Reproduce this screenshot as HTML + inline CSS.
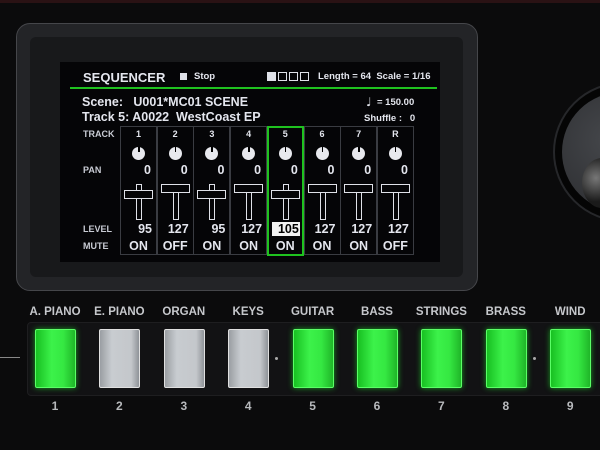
<!DOCTYPE html>
<html><head><style>
*{margin:0;padding:0;box-sizing:border-box}
body{width:600px;height:450px;background:#0b0b0c;position:relative;overflow:hidden;font-family:"Liberation Sans",sans-serif;font-weight:bold}
.a{position:absolute}
.t{position:absolute;color:#e4e6ee;white-space:nowrap}
.g{color:#c9ccd4}
.btn{position:absolute;top:329px;width:41px;height:59px;border-radius:2px}
.on{background:linear-gradient(90deg,#18c022,#3cf24a 40%,#35e842 70%,#1fb628);box-shadow:0 0 6px #1a9a22;border:1px solid #5aff66}
.off{background:linear-gradient(90deg,#9a9ea3,#c8ccd0 30%,#c4c7cb 80%,#8f9398);border:1px solid #e0e0e0}
.lab{position:absolute;top:306px;font-size:11.5px;color:#c6c8cc;width:80px;text-align:center}
.num{position:absolute;top:399px;font-size:12px;color:#b8babd;width:20px;text-align:center}
</style></head><body>
<div class="a" style="left:0;top:0;width:600px;height:3px;background:#2a1214"></div>
<!-- bezel -->
<div class="a" style="left:16px;top:23px;width:462px;height:268px;border-radius:14px;background:#232427;border:1px solid #45464a"></div>
<div class="a" style="left:30px;top:37px;width:433px;height:240px;border-radius:6px;background:#18191b"></div>
<div class="a" style="left:60px;top:62px;width:380px;height:200px;background:#050507"></div>
<!-- knob -->
<div class="a" style="left:553px;top:82px;width:140px;height:140px;border-radius:50%;background:#050505;border:2px solid #26272a"></div>
<div class="a" style="left:562px;top:92px;width:120px;height:120px;border-radius:50%;background:radial-gradient(circle at 40% 40%,#45474b,#27282b)"></div>
<div class="a" style="left:582px;top:158px;width:40px;height:50px;border-radius:50%;background:radial-gradient(circle at 35% 40%,#777,#1a1a1a 60%)"></div>
<!-- header -->
<div class="t" style="left:83px;top:70px;font-size:13px">SEQUENCER</div>
<div class="a" style="left:180px;top:73px;width:7px;height:7px;background:#dfe1e8"></div>
<div class="t" style="left:194px;top:71px;font-size:9.5px">Stop</div>
<div class="a" style="left:267px;top:72px;width:9px;height:9px;background:#dfe1e8"></div>
<div class="a" style="left:278px;top:72px;width:9px;height:9px;border:1px solid #dfe1e8"></div>
<div class="a" style="left:289px;top:72px;width:9px;height:9px;border:1px solid #dfe1e8"></div>
<div class="a" style="left:300px;top:72px;width:9px;height:9px;border:1px solid #dfe1e8"></div>
<div class="t" style="left:318px;top:71px;font-size:9.5px">Length = 64&nbsp; Scale = 1/16</div>
<div class="a" style="left:70px;top:87px;width:367px;height:2px;background:#1fc21f"></div>
<div class="t" style="left:82px;top:95px;font-size:12.5px">Scene:&nbsp;&nbsp; U001*MC01 SCENE</div>
<div class="t" style="left:82px;top:110px;font-size:12.5px">Track 5: A0022&nbsp; WestCoast EP</div>
<div class="t" style="left:366px;top:95px;font-size:12px;font-family:'DejaVu Sans',sans-serif;font-weight:normal">♩</div>
<div class="t" style="left:377px;top:97px;font-size:9.5px">= 150.00</div>
<div class="t" style="left:364px;top:113px;font-size:9.5px">Shuffle :&nbsp;&nbsp; 0</div>
<div class="t g" style="left:83px;top:129px;font-size:9px">TRACK</div>
<div class="t g" style="left:83px;top:165px;font-size:9px">PAN</div>
<div class="t g" style="left:83px;top:224px;font-size:9px">LEVEL</div>
<div class="t g" style="left:83px;top:241px;font-size:9px">MUTE</div>
<div id="grid"></div>
<!-- buttons -->
<div class="a" style="left:27px;top:322px;width:580px;height:74px;border-radius:4px;background:#121214;border:1px solid #1e1e20"></div>
<div class="a" style="left:0;top:357px;width:20px;height:1px;background:#888"></div>
<div class="a" style="left:275px;top:357px;width:3px;height:3px;border-radius:50%;background:#aaa"></div>
<div class="a" style="left:533px;top:357px;width:3px;height:3px;border-radius:50%;background:#aaa"></div>
<div id="btns"></div>
<script>
var lv=[95,127,95,127,105,127,127,127],mu=["ON","OFF","ON","ON","ON","ON","ON","OFF"],tr=["1","2","3","4","5","6","7","R"];
var h="";
for(var i=0;i<8;i++){var x=120+i*36.7;
h+='<div class="a" style="left:'+x+'px;top:126px;width:37px;height:129px;border:1px solid #3a3c42"></div>';
h+='<div class="t" style="left:'+x+'px;top:129px;width:37px;text-align:center;font-size:9px">'+tr[i]+'</div>';
h+='<div class="a" style="left:'+(x+12)+'px;top:147px;width:13px;height:13px;border-radius:50%;background:#e8e9ee"></div><div class="a" style="left:'+(x+18)+'px;top:147px;width:1.5px;height:5px;background:#000"></div>';
h+='<div class="t" style="left:'+x+'px;top:163px;width:31px;text-align:right;font-size:12.5px">0</div>';
var cy=lv[i]==127?184:190;
h+='<div class="a" style="left:'+(x+16)+'px;top:184px;width:6px;height:36px;border:1.5px solid #dfe1e8"></div>';
h+='<div class="a" style="left:'+(x+4)+'px;top:'+cy+'px;width:29px;height:9px;border:1.5px solid #dfe1e8;background:#050507"></div>';
if(lv[i]==105)h+='<div class="a" style="left:'+(x+5)+'px;top:222px;width:28px;height:14px;background:#f2f2f2"></div><div class="t" style="left:'+x+'px;top:222px;width:32px;text-align:right;font-size:12.5px;color:#000">105</div>';
else h+='<div class="t" style="left:'+x+'px;top:222px;width:32px;text-align:right;font-size:12.5px">'+lv[i]+'</div>';
h+='<div class="t" style="left:'+x+'px;top:239px;width:37px;text-align:center;font-size:12.5px">'+mu[i]+'</div>';}
h+='<div class="a" style="left:267px;top:126px;width:37px;height:130px;border:2px solid #1fc21f"></div>';
document.getElementById("grid").innerHTML=h;
var L=["A. PIANO","E. PIANO","ORGAN","KEYS","GUITAR","BASS","STRINGS","BRASS","WIND"],s="";
for(var j=0;j<9;j++){var bx=35+j*64.4;var on=(j==0||j>=4);
s+='<div class="btn '+(on?'on':'off')+'" style="left:'+bx+'px"></div>';
s+='<div class="lab" style="left:'+(bx-20)+'px">'+L[j]+'</div>';
s+='<div class="num" style="left:'+(bx+10)+'px">'+(j+1)+'</div>';}
document.getElementById("btns").innerHTML=s;
</script>
</body></html>
